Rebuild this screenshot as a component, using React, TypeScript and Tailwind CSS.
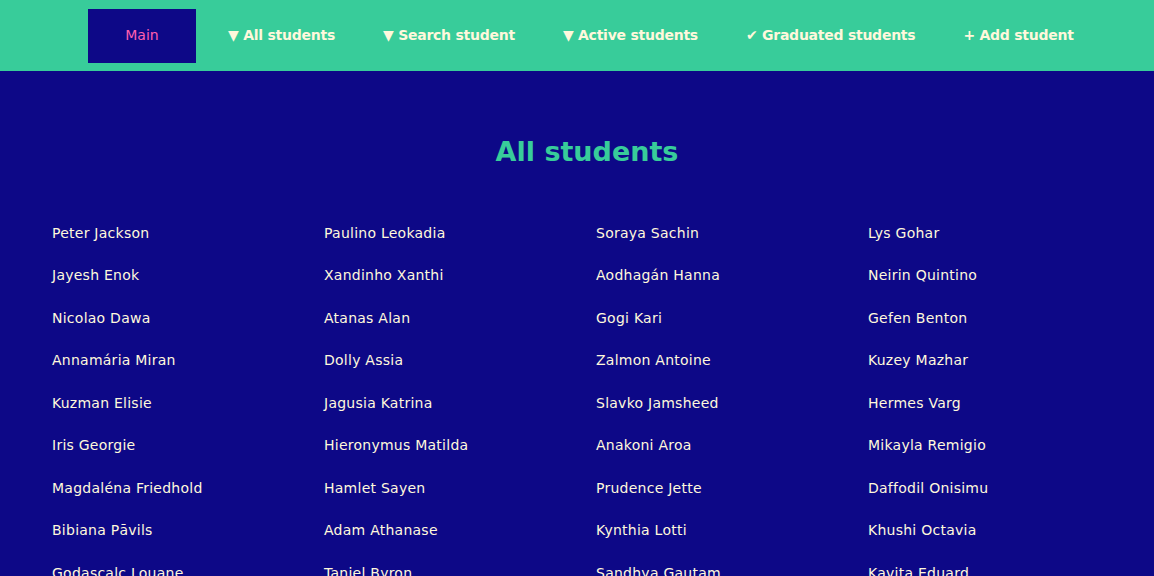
const students = [
  "Peter Jackson", "Paulino Leokadia", "Soraya Sachin", "Lys Gohar",
  "Jayesh Enok", "Xandinho Xanthi", "Aodhagán Hanna", "Neirin Quintino",
  "Nicolao Dawa", "Atanas Alan", "Gogi Kari", "Gefen Benton",
  "Annamária Miran", "Dolly Assia", "Zalmon Antoine", "Kuzey Mazhar",
  "Kuzman Elisie", "Jagusia Katrina", "Slavko Jamsheed", "Hermes Varg",
  "Iris Georgie", "Hieronymus Matilda", "Anakoni Aroa", "Mikayla Remigio",
  "Magdaléna Friedhold", "Hamlet Sayen", "Prudence Jette", "Daffodil Onisimu",
  "Bibiana Pāvils", "Adam Athanase", "Kynthia Lotti", "Khushi Octavia",
  "Godascalc Louane", "Tanjel Byron", "Sandhya Gautam", "Kavita Eduard",
];

const navItems = [
  { icon: "▼", label: "All students" },
  { icon: "▼", label: "Search student" },
  { icon: "▼", label: "Active students" },
  { icon: "✔", label: "Graduated students" },
  { icon: "+", label: "Add student" },
];

export default function App() {
  return (
    <div className="min-h-[576px] bg-[#0d0887] font-['DejaVu_Sans',Verdana,sans-serif]">
      <nav className="flex h-[71px] items-center bg-[#38cc9a] pl-[88px]">
        <a className="mr-2 flex h-[54px] w-[108px] items-center justify-center bg-[#0d0887] text-[14px] text-[#ff5fae]">
          Main
        </a>
        {navItems.map((item) => (
          <a key={item.label} className="px-6 text-[14px] font-bold tracking-[-0.25px] text-[#fff8dc]">
            {item.icon} {item.label}
          </a>
        ))}
      </nav>

      <main>
        <h1 className="mt-[64px] pl-5 text-center text-[27px] font-bold leading-[34px] text-[#38cc9a]">
          All students
        </h1>
        <ul className="mt-[43px] grid grid-cols-[repeat(4,272px)] pl-[52px]">
          {students.map((name) => (
            <li key={name} className="flex h-[42.5px] items-center text-[14px] tracking-[0.25px] text-[#fff8dc]">
              {name}
            </li>
          ))}
        </ul>
      </main>
    </div>
  );
}
